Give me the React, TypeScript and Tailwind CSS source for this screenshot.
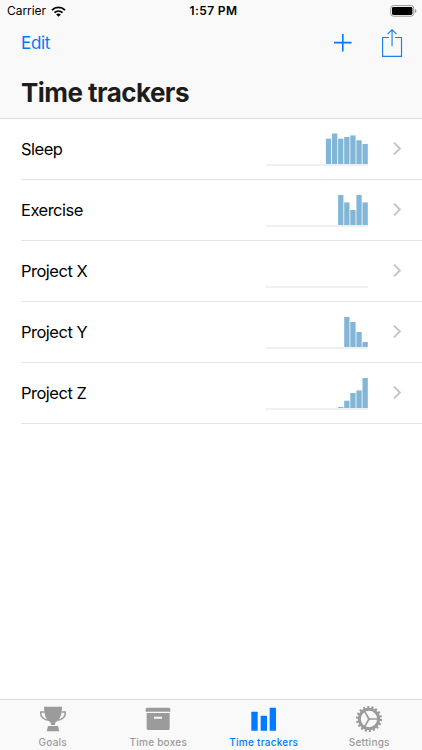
import type { ReactNode } from "react";

type Tracker = { name: string; bars: number[] };

// bar heights in px, most recent day last
const TRACKERS: Tracker[] = [
  { name: "Sleep", bars: [25.3, 30.5, 25.3, 27, 28.6, 23.7, 20] },
  { name: "Exercise", bars: [30, 22.6, 15, 30, 22.6] },
  { name: "Project X", bars: [] },
  { name: "Project Y", bars: [30, 25, 15, 5] },
  { name: "Project Z", bars: [1, 7.3, 15, 17.6, 30] },
];

function Wifi() {
  return (
    <svg className="ml-[5px] h-[11px] w-[15px]" viewBox="0 0 45 33" fill="none" stroke="#000" strokeWidth="5.5">
      <path d="M3 12.5C14 1.5 31 1.5 42 12.5" />
      <path d="M10.5 20C17.500 13.500 27.500 13.500 34.500 20" />
      <path d="M15.500 25.500C19.500 21.500 25.500 21.500 29.500 25.500L22.500 32Z" fill="#000" stroke="none" />
    </svg>
  );
}

function Battery() {
  return (
    <svg className="h-[12px] w-[27px]" viewBox="0 0 27 12">
      <rect x="0.700" y="0.600" width="23" height="10.600" rx="2.600" fill="none" stroke="#999" strokeWidth="1" />
      <rect x="2" y="2" width="20.400" height="7.900" rx="1.300" fill="#000" />
      <path d="M24.900 4v4c1.100-.3 1.500-1.100 1.500-2s-.4-1.700-1.500-2Z" fill="#999" />
    </svg>
  );
}

function Plus() {
  return (
    <svg className="mb-[2px] h-[18px] w-[18px]" viewBox="0 0 18 18" stroke="#007aff" strokeWidth="1.600">
      <path d="M8.800 0v17.400M0 8.600h17.600" />
    </svg>
  );
}

function Share() {
  return (
    <svg className="h-[29px] w-[21px]" viewBox="0 0 21 29" fill="none" stroke="#1b7fe8" strokeWidth="1.150">
      <path d="M7 8.500H.6v18.900h18.900V8.500h-6.400" />
      <path d="M10.050 17.300V.9M5.650 5.100l4.400-4.400 4.400 4.400" />
    </svg>
  );
}

function Chevron() {
  return (
    <svg className="h-[14px] w-[9px]" viewBox="0 0 9 14" fill="none" stroke="#c4c4c8" strokeWidth="1.900">
      <path d="M1 .6l5.900 5.900L1 12.400" />
    </svg>
  );
}

function Trophy() {
  return (
    <svg className="h-[26px] w-[28px]" viewBox="0 0 84 78" fill="#9b9b9b">
      <path d="M15 2h54c0 22-5 38-17 45-3 2-4 5-4 10H36c0-5-1-8-4-10C20 40 15 24 15 2Z" />
      <path d="M17 18H5c-1 14 8 24 26 25M67 18h12c1 14-8 24-26 25" fill="none" stroke="#9b9b9b" strokeWidth="4.500" />
      <path d="M27 60h30l4 16H23Z" />
    </svg>
  );
}

function Box() {
  return (
    <svg className="h-[26px] w-[28px]" viewBox="0 0 84 78" fill="#9b9b9b">
      <path d="M9 5h66q4 0 4 4v8H5V9q0-4 4-4Z" />
      <path fillRule="evenodd" d="M8 21h69v47q0 4-4 4H12q-4 0-4-4V21Zm22 11v6h24v-6H30Z" />
    </svg>
  );
}

function Bars() {
  return (
    <svg className="h-[26px] w-[28px]" viewBox="0 0 84 78" fill="#007aff">
      <rect x="4" y="17" width="19" height="57" rx="1.500" />
      <rect x="32" y="29" width="19" height="45" rx="1.500" />
      <rect x="59" y="5" width="19" height="69" rx="1.500" />
    </svg>
  );
}

function Gear() {
  return (
    <svg className="h-[26px] w-[28px]" viewBox="0 0 84 78" fill="none" stroke="#9b9b9b">
      <circle cx="42" cy="39" r="29" strokeWidth="9" />
      {/* pathLength makes each tooth one unit out of 36 */}
      <circle cx="42" cy="39" r="35.500" strokeWidth="7" pathLength="36" strokeDasharray="1 1" />
      <path d="M42 39h28M42 39L28 14.800M42 39L28 63.200" strokeWidth="5" />
      <circle cx="42" cy="39" r="4" fill="#9b9b9b" stroke="none" />
    </svg>
  );
}

function Sparkline({ bars }: { bars: number[] }) {
  return (
    <svg className="mt-[14px] h-[33px] w-[102px]" viewBox="0 0 102 33">
      <rect y="31" width="102" height="2" fill="#efeff4" />
      {bars.map((height, i) => (
        <rect
          key={i}
          x={102.6 - (bars.length - i) * 6.1}
          y={31 - height}
          width="5.300"
          height={height}
          fill="#82b6d6"
        />
      ))}
    </svg>
  );
}

function TrackerRow({ name, bars }: Tracker) {
  return (
    <li className="ml-[21px] flex h-[61px] border-b border-[#e4e4e6] pr-[20px]">
      <span className="flex-1 pt-[18px] text-[16.5px] leading-6 tracking-[-0.5px] text-black">{name}</span>
      <Sparkline bars={bars} />
      <span className="ml-[25px] pt-[23px]">
        <Chevron />
      </span>
    </li>
  );
}

function Tab({ label, icon, active = false }: { label: string; icon: ReactNode; active?: boolean }) {
  return (
    <button className={`flex flex-1 flex-col items-center pt-[6px] ${active ? "text-[#007aff]" : "text-[#999]"}`}>
      {icon}
      <span className="mt-[3px] text-[10px] leading-[14px] font-medium tracking-[0.25px] whitespace-nowrap">{label}</span>
    </button>
  );
}

export default function App() {
  return (
    <div className="flex h-[750px] w-[422px] flex-col overflow-hidden bg-white font-['Inter',sans-serif]">
      <header className="h-[119px] border-b border-[#dcdcdd] bg-[#f9f9f9]">
        <div className="grid h-[22px] grid-cols-3 items-center pr-[5px] pl-[7px] text-[12px] text-black">
          <div className="flex items-center">
            <span className="tracking-[-0.05px]">Carrier</span>
            <Wifi />
          </div>
          <span className="pl-[3px] text-center font-semibold tracking-[0.4px]">1:57 PM</span>
          <div className="flex justify-end">
            <Battery />
          </div>
        </div>
        <div className="flex h-[43px] items-center pr-[19px] pl-[21px]">
          <button className="flex-1 pt-px text-left text-[17px] tracking-[-0.3px] text-[#007aff]">Edit</button>
          <Plus />
          <span className="ml-[30px]">
            <Share />
          </span>
        </div>
        <h1 className="pt-[10px] pl-[21px] text-[26px] leading-[36px] font-bold tracking-[-0.55px] text-[#1d1d1d]">
          Time trackers
        </h1>
      </header>

      <ul className="flex-1">
        {TRACKERS.map((tracker) => (
          <TrackerRow key={tracker.name} {...tracker} />
        ))}
      </ul>

      <nav className="flex h-[51px] border-t border-[#dcdcdd] bg-[#f9f9f9]">
        <Tab label="Goals" icon={<Trophy />} />
        <Tab label="Time boxes" icon={<Box />} />
        <Tab label="Time trackers" icon={<Bars />} active />
        <Tab label="Settings" icon={<Gear />} />
      </nav>
    </div>
  );
}
